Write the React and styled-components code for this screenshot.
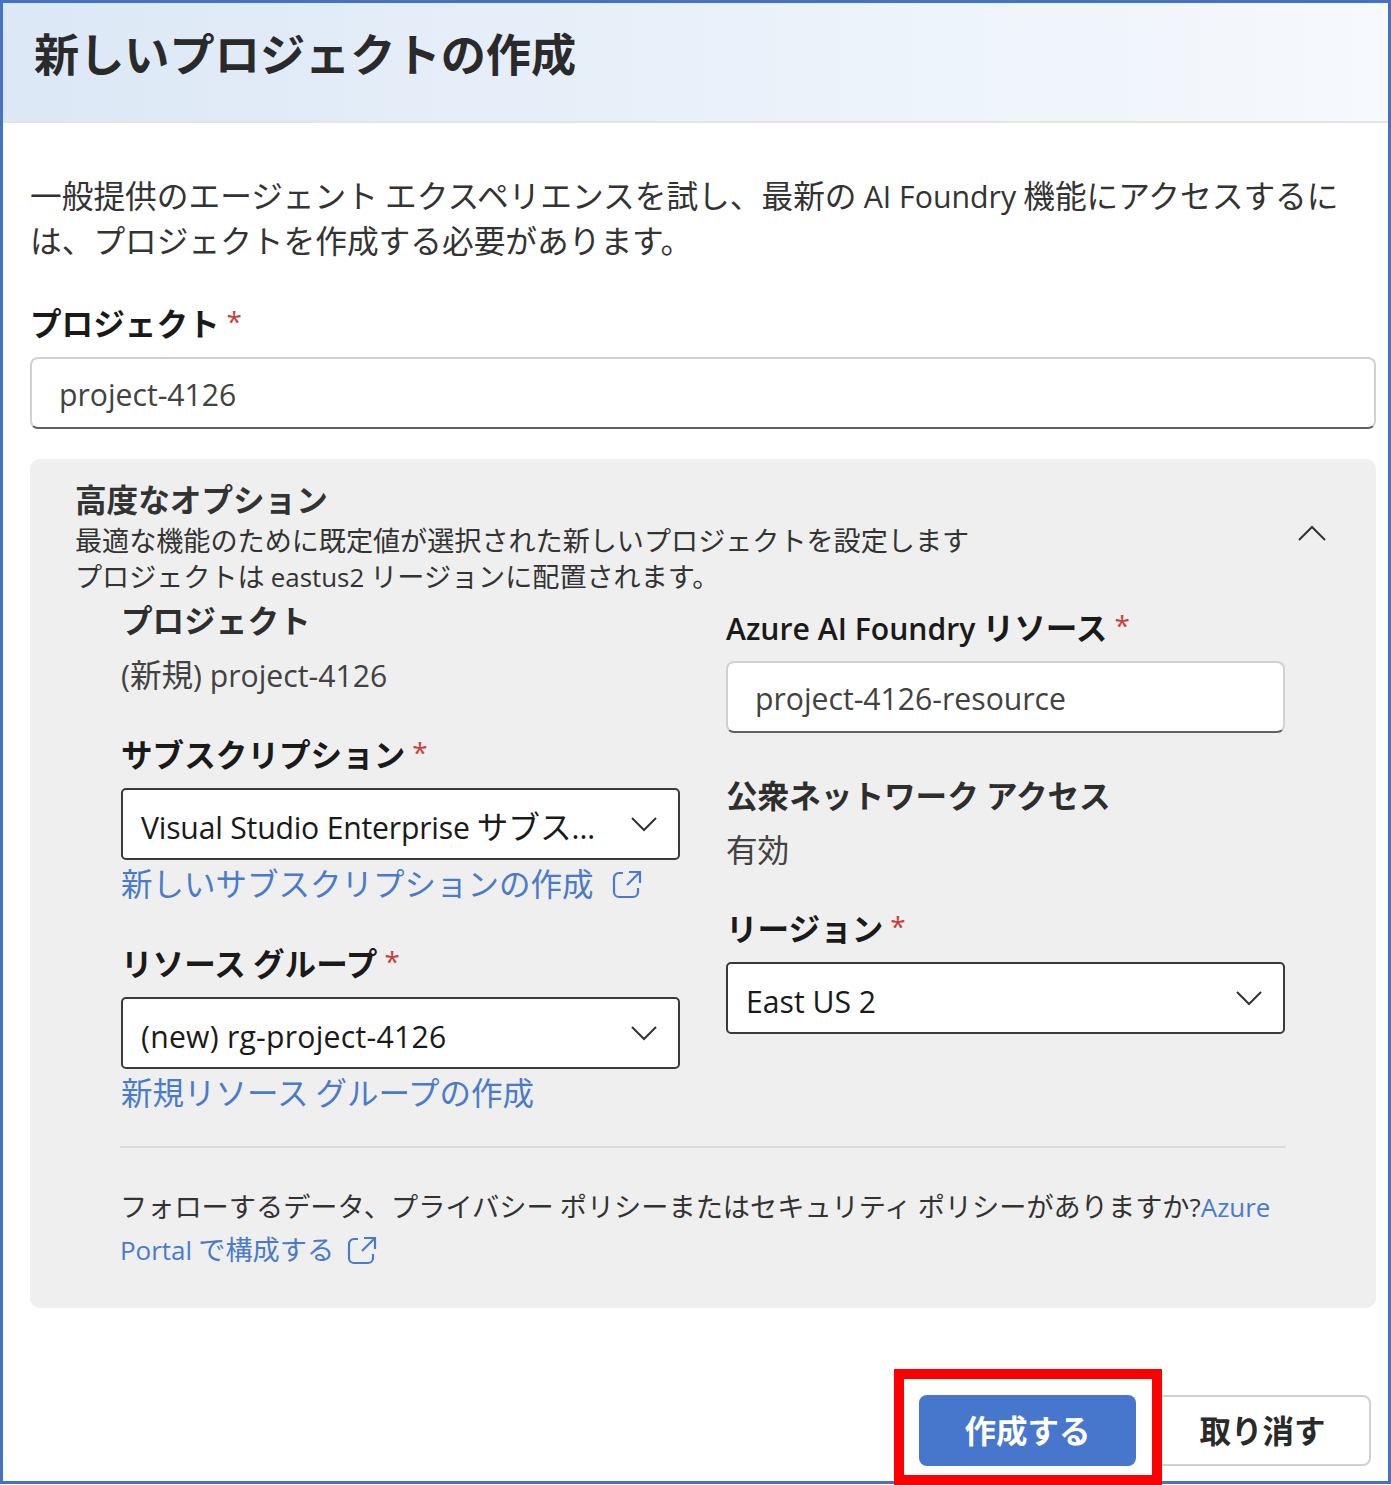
import React from "react";
import styled, { createGlobalStyle } from "styled-components";

const Global = createGlobalStyle`
  html, body { margin: 0; padding: 0; background: #ffffff; }
  body { font-family: "Noto Sans CJK JP", sans-serif; color: #242424; }
  * { box-sizing: border-box; }
`;

const Page = styled.div`
  position: relative;
  width: 1391px;
  height: 1485px;
  overflow: hidden;
`;

const Frame = styled.div`
  width: 1391px;
  height: 1484px;
  border: 3px solid #4472c4;
  display: flex;
  flex-direction: column;
`;

const Header = styled.div`
  height: 120px;
  flex: none;
  display: flex;
  align-items: center;
  padding: 0 31px 18px;
  background: linear-gradient(90deg, #dce8f6 0%, #f6f9fd 100%);
  border-bottom: 2px solid #e4e4e4;
`;

const Title = styled.h1`
  margin: 0;
  font-size: 45.2px;
  font-weight: 700;
  line-height: 60px;
  color: #2a2a2a;
`;

const Body = styled.div`
  flex: 1;
  display: flex;
  flex-direction: column;
  padding: 49px 12px 0 27px;
`;

const Latin = styled.span`
  font-family: "Open Sans", sans-serif;
  font-size: 0.955em;
  line-height: 0;
  font-weight: ${props => (props.$semi ? 600 : 400)};
  letter-spacing: ${props => props.$track || 0}px;
`;

const Intro = styled.p`
  margin: 0 0 38px;
  font-size: 31.7px;
  line-height: 45px;
  color: #333333;
  white-space: nowrap;
`;

const Label = styled.div`
  font-size: 31.6px;
  line-height: 44px;
  font-weight: 700;
  color: ${props => (props.$muted ? "#2e2e2e" : "#1a1a1a")};
  white-space: nowrap;
`;

const Star = styled.span`
  font-family: "Open Sans", sans-serif;
  color: #c8403a;
  font-weight: 400;
  font-size: 28px;
  line-height: 0;
  margin-left: 7px;
  vertical-align: 4px;
`;

const TextInput = styled.div`
  height: 72px;
  margin-top: 13px;
  display: flex;
  align-items: center;
  padding: 4px 27px 0;
  background: #ffffff;
  border: 2px solid #d1d1d1;
  border-bottom-color: #616161;
  border-radius: 8px;
  font-size: 31.6px;
  color: #424242;
`;

const Panel = styled.div`
  position: relative;
  height: 849px;
  margin-top: 30px;
  padding: 17px 90px 0 45px;
  background: #efefef;
  border-radius: 10px;
`;

const PanelTitle = styled.div`
  margin-bottom: 2px;
  font-size: 31.6px;
  line-height: 44px;
  font-weight: 700;
  color: #333333;
`;

const PanelDesc = styled.div`
  font-size: 27.1px;
  line-height: 36px;
  color: #333333;
  white-space: nowrap;
`;

const Collapse = styled.svg`
  position: absolute;
  top: 62px;
  right: 48px;
  width: 32px;
  height: 24px;
`;

const Columns = styled.div`
  display: grid;
  grid-template-columns: 559px 559px;
  column-gap: 46px;
  padding-left: 46px;
  margin-top: 3px;
`;

const Column = styled.div`
  display: flex;
  flex-direction: column;
`;

const Field = styled.div`
  margin-top: ${props => props.$top || 0}px;
`;

const Value = styled.div`
  font-size: 31.6px;
  line-height: 44px;
  margin-top: 10px;
  color: #424242;
`;

const Select = styled.div`
  height: 72px;
  margin-top: 13px;
  display: flex;
  align-items: center;
  justify-content: space-between;
  padding: 0 20px 0 18px;
  background: #ffffff;
  border: 2px solid #3a3a3a;
  border-radius: 5px;
  font-size: 31.6px;
  color: #1a1a1a;
  white-space: nowrap;
`;

const SelectText = styled.span`
  padding-top: 1px;
`;

const Link = styled.a`
  display: flex;
  align-items: center;
  gap: 18px;
  font-size: 31.5px;
  line-height: 44px;
  color: #4a7bcb;
  white-space: nowrap;

  & svg {
    margin-top: 4px;
  }
`;

const Divider = styled.div`
  height: 2px;
  margin: 33px 0 0 45px;
  width: 1166px;
  background: #dcdcdc;
`;

const Note = styled.div`
  margin: 36px 0 0 45px;
  width: 1166px;
  font-size: 27.2px;
  line-height: 43px;
  color: #333333;
  white-space: nowrap;
`;

const NoteLink = styled.span`
  color: #4a7bcb;
`;

const Icon = styled.svg`
  display: inline-block;
  vertical-align: -5px;
  margin-left: ${props => props.$left || 0}px;
  flex: none;
`;

const Footer = styled.div`
  flex: none;
  display: flex;
  justify-content: flex-end;
  gap: 18px;
  padding: 0 17px 15px 0;
`;

const Primary = styled.div`
  width: 217px;
  height: 71px;
  padding-bottom: 3px;
  display: flex;
  align-items: center;
  justify-content: center;
  background: #4777cd;
  border-radius: 8px;
  color: #ffffff;
  font-size: 31.5px;
  font-weight: 700;
`;

const Secondary = styled(Primary)`
  background: #ffffff;
  border: 2px solid #d1d1d1;
  color: #2a2a2a;
`;

const Highlight = styled.div`
  position: absolute;
  left: 894px;
  top: 1369px;
  width: 268px;
  height: 116px;
  border: 10px solid #ff0000;
`;

const Chevron = () => (
  <svg width="28" height="18" viewBox="0 0 28 18" fill="none">
    <path d="M2 3l12 12L26 3" stroke="#333" strokeWidth="2" />
  </svg>
);

const External = ({ left }) => (
  <Icon $left={left} width="30" height="30" viewBox="0 0 30 30" fill="none">
    <path
      d="M11 4H7a5 5 0 0 0-5 5v14a5 5 0 0 0 5 5h14a5 5 0 0 0 5-5v-4M17 3h11v11M27 4L15 16"
      stroke="#4a7bcb"
      strokeWidth="2.2"
    />
  </Icon>
);

export default function App() {
  return (
    <Page>
      <Global />
      <Frame>
        <Header>
          <Title>新しいプロジェクトの作成</Title>
        </Header>
        <Body>
          <Intro>
            一般提供のエージェント エクスペリエンスを試し、最新の <Latin>AI Foundry</Latin> 機能にアクセスするに
            <br />
            は、プロジェクトを作成する必要があります。
          </Intro>
          <Label>
            プロジェクト<Star>*</Star>
          </Label>
          <TextInput>
            <Latin>project-4126</Latin>
          </TextInput>
          <Panel>
            <PanelTitle>高度なオプション</PanelTitle>
            <PanelDesc>最適な機能のために既定値が選択された新しいプロジェクトを設定します</PanelDesc>
            <PanelDesc>
              プロジェクトは <Latin>eastus2</Latin> リージョンに配置されます。
            </PanelDesc>
            <Collapse viewBox="0 0 32 24" fill="none">
              <path d="M3 19L16 6l13 13" stroke="#333" strokeWidth="2" />
            </Collapse>
            <Columns>
              <Column>
                <Label $muted>プロジェクト</Label>
                <Value>
                  <Latin>(</Latin>新規<Latin>) project-4126</Latin>
                </Value>
                <Field $top={36}>
                  <Label>
                    サブスクリプション<Star>*</Star>
                  </Label>
                  <Select>
                    <SelectText>
                      <Latin $track={-0.2}>Visual Studio Enterprise</Latin> サブス<Latin>...</Latin>
                    </SelectText>
                    <Chevron />
                  </Select>
                  <Link>
                    新しいサブスクリプションの作成
                    <External />
                  </Link>
                </Field>
                <Field $top={36}>
                  <Label>
                    リソース グループ<Star>*</Star>
                  </Label>
                  <Select>
                    <SelectText>
                      <Latin $track={0.25}>(new) rg-project-4126</Latin>
                    </SelectText>
                    <Chevron />
                  </Select>
                  <Link>新規リソース グループの作成</Link>
                </Field>
              </Column>
              <Column>
                <Field $top={7}>
                  <Label>
                    <Latin $semi>Azure AI Foundry</Latin> リソース<Star>*</Star>
                  </Label>
                  <TextInput>
                    <Latin>project-4126-resource</Latin>
                  </TextInput>
                </Field>
                <Field $top={39}>
                  <Label $muted>公衆ネットワーク アクセス</Label>
                  <Value>有効</Value>
                </Field>
                <Field $top={35}>
                  <Label>
                    リージョン<Star>*</Star>
                  </Label>
                  <Select>
                    <SelectText>
                      <Latin>East US 2</Latin>
                    </SelectText>
                    <Chevron />
                  </Select>
                </Field>
              </Column>
            </Columns>
            <Divider />
            <Note>
              フォローするデータ、プライバシー ポリシーまたはセキュリティ ポリシーがありますか<Latin>?</Latin>
              <NoteLink>
                <Latin>Azure</Latin>
              </NoteLink>
              <br />
              <NoteLink>
                <Latin>Portal</Latin> で構成する
                <External left={13} />
              </NoteLink>
            </Note>
          </Panel>
        </Body>
        <Footer>
          <Primary>作成する</Primary>
          <Secondary>取り消す</Secondary>
        </Footer>
      </Frame>
      <Highlight />
    </Page>
  );
}
